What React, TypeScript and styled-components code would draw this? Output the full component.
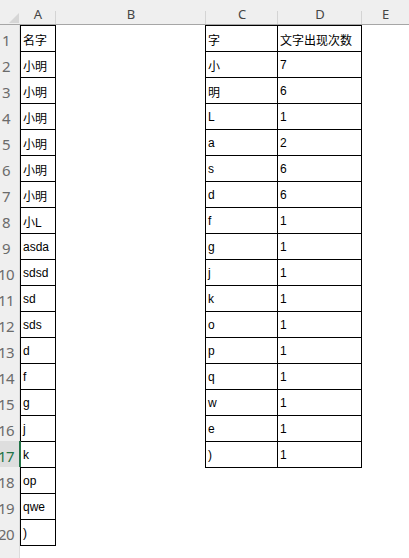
import React from "react";
import styled, { createGlobalStyle, css } from "styled-components";

const Global = createGlobalStyle`
  html, body { margin: 0; padding: 0; background: #ffffff; overflow: hidden; }
  body { font-family: "Liberation Sans", "Noto Sans CJK SC", sans-serif; }
`;

const Sheet = styled.div`
  width: 409px;
  height: 558px;
  display: flex;
  flex-direction: column;
  background: #ffffff;
`;

const HeaderBar = styled.div`
  display: flex;
  height: 25px;
  box-sizing: border-box;
  background: #efefef;
  border-bottom: 1px solid #a6a6a6;
  flex: none;
`;

const Corner = styled.div`
  width: 20px;
  flex: none;
  display: flex;
  align-items: flex-end;
  justify-content: flex-end;
  padding: 0 1px 1px 0;
  box-sizing: border-box;
`;

const ColHeader = styled.div<{ $w?: number }>`
  position: relative;
  ${(p) => (p.$w ? css`width: ${p.$w}px; flex: none;` : css`flex: 1;`)}
  display: flex;
  align-items: flex-end;
  justify-content: center;
  padding-bottom: 2px;
  box-sizing: border-box;
  font-family: "Noto Sans", "Liberation Sans", sans-serif;
  font-size: 13px;
  color: #454545;
  line-height: 16px;
  &::after {
    content: "";
    position: absolute;
    right: 0;
    top: 11px;
    bottom: 0;
    width: 1px;
    background: ${(p) => (p.$w ? "#d4d4d4" : "transparent")};
  }
`;

const Body = styled.div`
  display: flex;
  flex: 1;
  align-items: flex-start;
`;

const RowHeaders = styled.div`
  width: 20px;
  flex: none;
  align-self: stretch;
  display: flex;
  flex-direction: column;
  background: #efefef;
  border-right: 1px solid #dcdcdc;
  box-sizing: border-box;
`;

const RowNum = styled.div<{ $active?: boolean }>`
  height: 26px;
  flex: none;
  display: flex;
  align-items: flex-end;
  justify-content: center;
  padding: 0 8px 2px 0;
  box-sizing: border-box;
  width: 20px;
  font-family: "Noto Sans", "Liberation Sans", sans-serif;
  font-size: 15px;
  line-height: 18px;
  letter-spacing: -0.5px;
  white-space: nowrap;
  color: #6b6b6b;
  ${(p) =>
    p.$active &&
    css`
      position: relative;
      z-index: 1;
      background: #dedede;
      color: #217346;
      box-shadow: inset -1px 0 0 #217346, 1px 0 0 #217346;
    `}
`;

const Table = styled.div<{ $cols: string }>`
  display: grid;
  grid-template-columns: ${(p) => p.$cols};
  border-top: 1px solid #000;
  border-left: 1px solid #000;
  flex: none;
`;

const Cell = styled.div`
  height: 26px;
  box-sizing: border-box;
  border-right: 1px solid #000;
  border-bottom: 1px solid #000;
  display: flex;
  align-items: center;
  padding: 1px 0 0 2px;
  font-size: 12px;
  color: #000;
  white-space: nowrap;
  overflow: hidden;
`;

const Gap = styled.div<{ $w: number }>`
  width: ${(p) => p.$w}px;
  flex: none;
`;

const Triangle = () => (
  <svg width="10" height="10" viewBox="0 0 10 10">
    <polygon points="10,0 10,10 0,10" fill="#d6d6d6" />
  </svg>
);

const names = [
  "名字", "小明", "小明", "小明", "小明", "小明", "小明", "小L", "asda", "sdsd",
  "sd", "sds", "d", "f", "g", "j", "k", "op", "qwe", ")",
];

const counts: [string, string][] = [
  ["字", "文字出现次数"],
  ["小", "7"],
  ["明", "6"],
  ["L", "1"],
  ["a", "2"],
  ["s", "6"],
  ["d", "6"],
  ["f", "1"],
  ["g", "1"],
  ["j", "1"],
  ["k", "1"],
  ["o", "1"],
  ["p", "1"],
  ["q", "1"],
  ["w", "1"],
  ["e", "1"],
  [")", "1"],
];

export default function App() {
  return (
    <>
      <Global />
      <Sheet>
        <HeaderBar>
          <Corner>
            <Triangle />
          </Corner>
          <ColHeader $w={36}>A</ColHeader>
          <ColHeader $w={150}>B</ColHeader>
          <ColHeader $w={72}>C</ColHeader>
          <ColHeader $w={84}>D</ColHeader>
          <ColHeader>E</ColHeader>
        </HeaderBar>
        <Body>
          <RowHeaders>
            {names.map((_, i) => (
              <RowNum key={i} $active={i === 16}>
                {i + 1}
              </RowNum>
            ))}
          </RowHeaders>
          <Table $cols="35px">
            {names.map((n, i) => (
              <Cell key={i}>{n}</Cell>
            ))}
          </Table>
          <Gap $w={149} />
          <Table $cols="72px 84px">
            {counts.map(([c, d], i) => (
              <React.Fragment key={i}>
                <Cell>{c}</Cell>
                <Cell>{d}</Cell>
              </React.Fragment>
            ))}
          </Table>
        </Body>
      </Sheet>
    </>
  );
}
